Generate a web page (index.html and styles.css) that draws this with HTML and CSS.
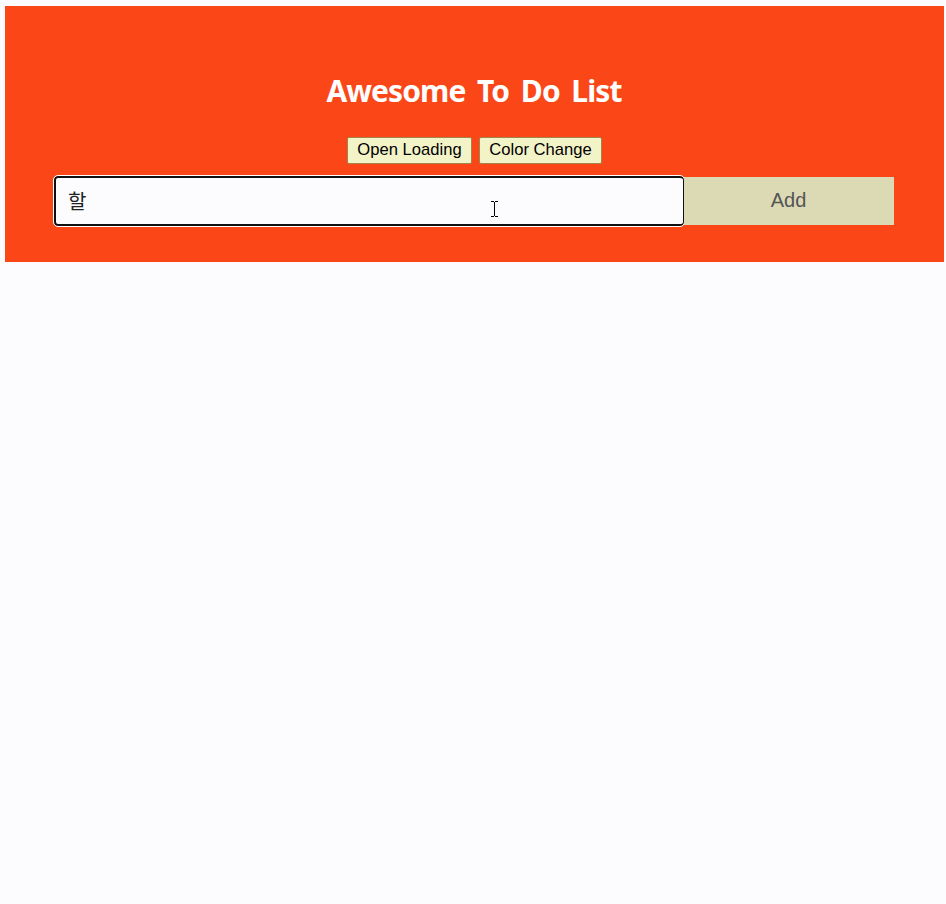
FILE: index.html
```html
<!DOCTYPE html>
<html lang="ko">
<head>
<meta charset="utf-8">
<title>Awesome To Do List</title>
<link rel="stylesheet" href="styles.css">
</head>
<body>
<header class="header">
  <h1 class="title">Awesome To Do List</h1>
  <div class="actions">
    <button class="action open" type="button">Open Loading</button>
    <button class="action color" type="button">Color Change</button>
  </div>
  <form class="todo-form">
    <input class="todo-input" type="text" value="할" aria-label="To do">
    <button class="add" type="button">Add</button>
  </form>
</header>
<svg class="cursor" width="7" height="16" viewBox="0 0 7 16" shape-rendering="crispEdges" aria-hidden="true"><path d="M0 0h3v1h1v-1h3v1h-3v14h3v1h-3v-1h-1v1h-3v-1h3v-14h-3z"/></svg>
</body>
</html>
```
FILE: styles.css
```css
* {
  box-sizing: border-box;
}

body {
  margin: 0;
  padding: 6px 2px 0 5px;
  min-height: 904px;
  background: #fcfcfe;
  font-family: "Liberation Sans", "Noto Sans CJK KR", sans-serif;
}

.header {
  height: 256px;
  padding: 62px 50px 0 49px;
  background: #fb4718;
}

.title {
  margin: 0;
  height: 44px;
  color: #fff;
  font: bold 30px/45px "Noto Sans", sans-serif;
  letter-spacing: -0.9px;
  word-spacing: 4.7px;
  text-align: center;
  white-space: nowrap;
}

.actions {
  display: flex;
  justify-content: center;
  gap: 7px;
  margin-top: 25px;
  padding-left: 1px;
}

.action {
  height: 27px;
  padding: 0 0 1px;
  border: 1px solid #a0864a;
  border-radius: 2px;
  background: #f3f3c8;
  color: #000;
  font: 16.6px/20px "Liberation Sans", sans-serif;
}

.open {
  width: 125px;
}

.color {
  width: 123px;
}

.todo-form {
  display: flex;
  align-items: center;
  margin-top: 12px;
  height: 50px;
}

.todo-input {
  width: 630px;
  height: 50px;
  padding: 0 12px 2px;
  border: 2px solid #101010;
  border-right-width: 1px;
  border-radius: 4px;
  outline: 1px solid #fff;
  background: #fcfcfe;
  color: #222;
  font: 20px "Noto Sans CJK KR", sans-serif;
}

.add {
  flex: 1;
  height: 48px;
  padding: 0 1px 2px 0;
  border: 0;
  background: #dcdab4;
  color: #555;
  font: 20px "Liberation Sans", sans-serif;
}

.cursor {
  position: absolute;
  left: 491px;
  top: 201px;
}
```
